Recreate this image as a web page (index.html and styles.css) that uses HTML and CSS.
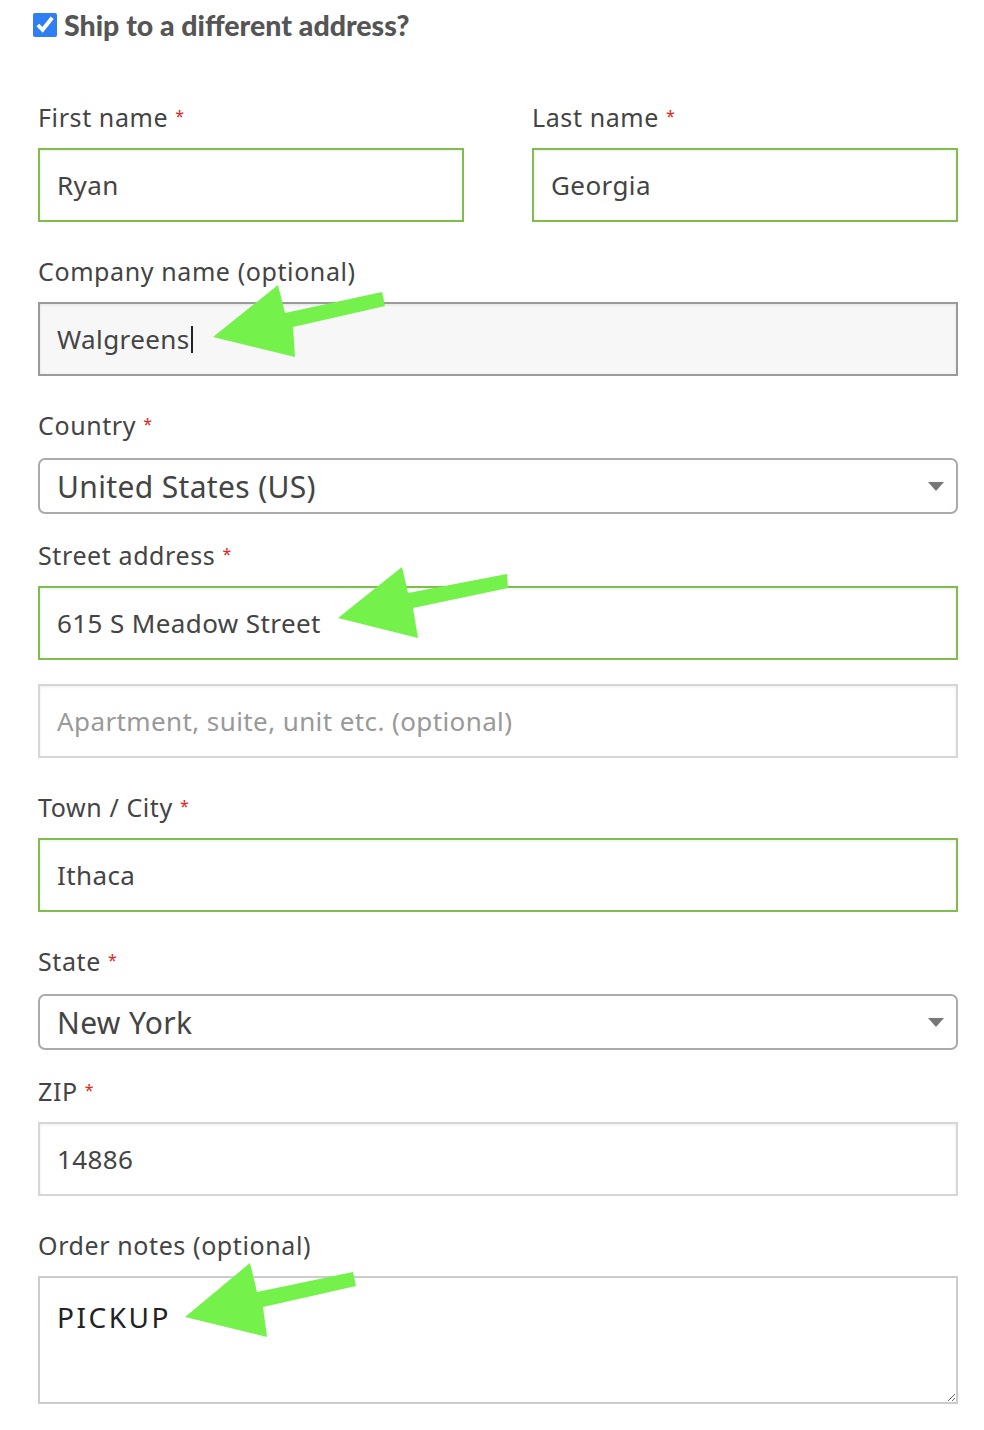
FILE: index.html
```html
<!DOCTYPE html>
<html lang="en">
<head>
  <meta charset="UTF-8">
  <meta name="viewport" content="width=device-width, initial-scale=1.0">
  <title>Shipping address</title>
  <link rel="stylesheet" href="styles.css">
</head>
<body>
  <div class="shipping">
    <h3 class="ship-toggle">
      <input type="checkbox" id="ship-different" checked>
      <label for="ship-different">Ship to a different address?</label>
    </h3>

    <div class="row-2">
      <div class="field">
        <label for="first_name">First name <abbr>*</abbr></label>
        <input type="text" id="first_name" class="valid" value="Ryan">
      </div>
      <div class="field">
        <label for="last_name">Last name <abbr>*</abbr></label>
        <input type="text" id="last_name" class="valid" value="Georgia">
      </div>
    </div>

    <div class="field">
      <label for="company">Company name (optional)</label>
      <div class="input-wrap">
        <input type="text" id="company" class="active" value="Walgreens">
        <span class="caret"></span>
      </div>
    </div>

    <div class="field field-select">
      <label for="country">Country <abbr>*</abbr></label>
      <div class="select-wrap">
        <select id="country">
          <option>United States (US)</option>
        </select>
      </div>
    </div>

    <div class="field">
      <label for="address_1">Street address <abbr>*</abbr></label>
      <input type="text" id="address_1" class="valid" value="615 S Meadow Street">
    </div>

    <div class="field">
      <input type="text" id="address_2" class="plain" placeholder="Apartment, suite, unit etc. (optional)">
    </div>

    <div class="field">
      <label for="city">Town / City <abbr>*</abbr></label>
      <input type="text" id="city" class="valid" value="Ithaca">
    </div>

    <div class="field field-select">
      <label for="state">State <abbr>*</abbr></label>
      <div class="select-wrap">
        <select id="state">
          <option>New York</option>
        </select>
      </div>
    </div>

    <div class="field">
      <label for="zip">ZIP <abbr>*</abbr></label>
      <input type="text" id="zip" class="plain" value="14886">
    </div>

    <div class="field">
      <label for="notes">Order notes (optional)</label>
      <textarea id="notes">PICKUP</textarea>
    </div>

    <!-- annotation arrows drawn over the form -->
    <svg class="arrows" width="984" height="1430" viewBox="0 0 984 1430">
      <polygon points="213,337 278,285 285,313 382,292 385,306 293,327 295,357" />
      <polygon points="338,618 402,567 408,593 507,574 508,588 413,608 418,638" />
      <polygon points="185,1317 250,1263 257,1292 353,1272 356,1286 263,1307 267,1337" />
    </svg>
  </div>
</body>
</html>
```

FILE: styles.css
```css
body {
  margin: 0;
  padding: 0;
  background: #fff;
  font-family: "Noto Sans", sans-serif;
  color: #444;
}
.shipping {
  position: relative;
  width: 920px;
  padding-left: 38px;
}
.ship-toggle {
  display: flex;
  align-items: center;
  gap: 7px;
  margin: 0 0 42px -5px;
  height: 50px;
  font-family: Lato, sans-serif;
  font-weight: 900;
  font-size: 28.5px;
  color: #555;
}
.ship-toggle input {
  width: 24px;
  height: 24px;
  margin: 0;
  accent-color: #2f7ff2;
}
.row-2 {
  display: grid;
  grid-template-columns: 426px 426px;
  gap: 68px;
}
.field {
  margin-bottom: 24px;
}
.field-select {
  margin-bottom: 16px;
}
.field label {
  display: block;
  font-size: 25px;
  letter-spacing: 0.6px;
  line-height: 50px;
  margin-bottom: 6px;
  color: #444;
}
.field-select label {
  margin-bottom: 8px;
}
abbr {
  color: #e2231a;
  text-decoration: none;
  font-size: 16px;
  vertical-align: top;
  position: relative;
  top: -1px;
  letter-spacing: 0;
}
.input-wrap {
  position: relative;
}
.caret {
  position: absolute;
  left: 153px;
  top: 24px;
  width: 2px;
  height: 27px;
  background: #222;
}
input[type="text"] {
  display: block;
  box-sizing: border-box;
  width: 100%;
  height: 74px;
  padding: 0 17px;
  font-family: inherit;
  font-size: 26px;
  letter-spacing: 0.4px;
  color: #444;
  background: #fff;
  border: 2px solid #ccc;
  box-shadow: inset 0 1px 3px rgba(0, 0, 0, 0.08);
  outline: none;
}
input.valid {
  border-color: #7fbd4d;
}
input.active {
  background: #f7f7f7;
  border-color: #9b9b9b;
}
input.plain {
  border-color: #d6d6d6;
}
input::placeholder {
  color: #999;
}
.select-wrap {
  position: relative;
}
.select-wrap::after {
  content: "";
  position: absolute;
  right: 14px;
  top: 24px;
  border-left: 8px solid transparent;
  border-right: 8px solid transparent;
  border-top: 9px solid #777;
}
select {
  display: block;
  box-sizing: border-box;
  width: 100%;
  height: 56px;
  padding: 0 17px;
  appearance: none;
  -webkit-appearance: none;
  background: #fff;
  border: 2px solid #aaa;
  border-radius: 7px;
  font-family: inherit;
  font-size: 30px;
  letter-spacing: 0.35px;
  color: #444;
}
textarea {
  display: block;
  box-sizing: border-box;
  width: 100%;
  height: 128px;
  padding: 20px 17px;
  border: 2px solid #ccc;
  font-family: inherit;
  font-size: 28px;
  letter-spacing: 2.5px;
  color: #222;
  outline: none;
}
.arrows {
  position: absolute;
  left: 0;
  top: 0;
  pointer-events: none;
}
.arrows polygon {
  fill: #74f24b;
}
```
